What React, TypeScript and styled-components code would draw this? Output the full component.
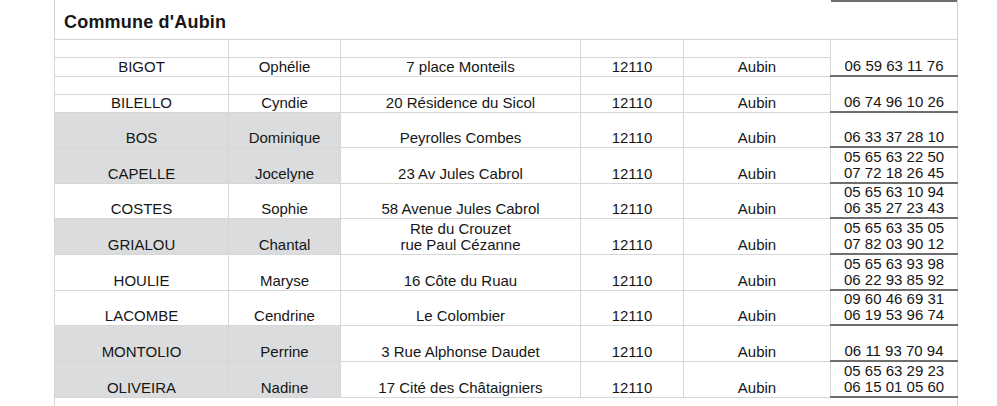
import React from "react"
import styled, { createGlobalStyle } from "styled-components"

type Entry = {
  nom?: string
  prenom?: string
  adresse?: string[]
  cp?: string
  ville?: string
  tel?: string[]
  height: number
  shaded?: boolean
  phoneLine?: boolean
}

const entries: Entry[] = [
  { height: 18 },
  {
    nom: "BIGOT",
    prenom: "Ophélie",
    adresse: ["7 place Monteils"],
    cp: "12110",
    ville: "Aubin",
    tel: ["06 59 63 11 76"],
    height: 19,
    phoneLine: true,
  },
  { height: 18 },
  {
    nom: "BILELLO",
    prenom: "Cyndie",
    adresse: ["20 Résidence du Sicol"],
    cp: "12110",
    ville: "Aubin",
    tel: ["06 74 96 10 26"],
    height: 18,
    phoneLine: true,
  },
  {
    nom: "BOS",
    prenom: "Dominique",
    adresse: ["Peyrolles Combes"],
    cp: "12110",
    ville: "Aubin",
    tel: ["06 33 37 28 10"],
    height: 35,
    shaded: true,
    phoneLine: true,
  },
  {
    nom: "CAPELLE",
    prenom: "Jocelyne",
    adresse: ["23 Av Jules Cabrol"],
    cp: "12110",
    ville: "Aubin",
    tel: ["05 65 63 22 50", "07 72 18 26 45"],
    height: 36,
    shaded: true,
    phoneLine: true,
  },
  {
    nom: "COSTES",
    prenom: "Sophie",
    adresse: ["58 Avenue Jules Cabrol"],
    cp: "12110",
    ville: "Aubin",
    tel: ["05 65 63 10 94", "06 35 27 23 43"],
    height: 34,
    phoneLine: true,
  },
  {
    nom: "GRIALOU",
    prenom: "Chantal",
    adresse: ["Rte du Crouzet", "rue Paul Cézanne"],
    cp: "12110",
    ville: "Aubin",
    tel: ["05 65 63 35 05", "07 82 03 90 12"],
    height: 36,
    shaded: true,
    phoneLine: true,
  },
  {
    nom: "HOULIE",
    prenom: "Maryse",
    adresse: ["16 Côte du Ruau"],
    cp: "12110",
    ville: "Aubin",
    tel: ["05 65 63 93 98", "06 22 93 85 92"],
    height: 36,
    phoneLine: true,
  },
  {
    nom: "LACOMBE",
    prenom: "Cendrine",
    adresse: ["Le Colombier"],
    cp: "12110",
    ville: "Aubin",
    tel: ["09 60 46 69 31", "06 19 53 96 74"],
    height: 35,
    phoneLine: true,
  },
  {
    nom: "MONTOLIO",
    prenom: "Perrine",
    adresse: ["3 Rue Alphonse Daudet"],
    cp: "12110",
    ville: "Aubin",
    tel: ["06 11 93 70 94"],
    height: 36,
    shaded: true,
    phoneLine: true,
  },
  {
    nom: "OLIVEIRA",
    prenom: "Nadine",
    adresse: ["17 Cité des Châtaigniers"],
    cp: "12110",
    ville: "Aubin",
    tel: ["05 65 63 29 23", "06 15 01 05 60"],
    height: 36,
    shaded: true,
    phoneLine: true,
  },
]

const GlobalStyle = createGlobalStyle`
  html, body {
    margin: 0;
    padding: 0;
    background: #ffffff;
  }
  body {
    font-family: "Liberation Sans", Arial, sans-serif;
    color: #161616;
  }
`

const Page = styled.div`
  width: 997px;
  height: 406px;
  overflow: hidden;
  padding-left: 54px;
  box-sizing: border-box;
`

const Sheet = styled.table`
  border-collapse: collapse;
  table-layout: fixed;
  width: 903px;
  font-size: 15px;
  line-height: 16px;
`

const TitleCell = styled.td`
  height: 39px;
  padding: 6px 0 0 9px;
  box-sizing: border-box;
  font-size: 18px;
  line-height: 20px;
  font-weight: bold;
  letter-spacing: 0.2px;
  vertical-align: middle;
  border-left: 1px solid #d4d4d4;
  border-right: 1px solid #d4d4d4;
  border-bottom: 1px solid #d4d4d4;
  background: linear-gradient(#6e6e6e, #6e6e6e) no-repeat right top / 126px 2px;
`

const Row = styled.tr<{ $h: number }>`
  height: ${(p) => p.$h}px;
`

const Cell = styled.td<{ $shaded?: boolean }>`
  padding: 0 0 1px;
  text-align: center;
  vertical-align: bottom;
  white-space: nowrap;
  border: 1px solid #d6d6d6;
  background: ${(p) => (p.$shaded ? "#dbdcdd" : "#ffffff")};
`

const PhoneCell = styled.td<{ $line?: boolean }>`
  padding: 0 0 1px;
  text-align: center;
  vertical-align: bottom;
  white-space: nowrap;
  border-left: 1px solid #d6d6d6;
  border-right: 1px solid #d6d6d6;
  border-top: none;
  border-bottom: ${(p) => (p.$line ? "2px solid #6e6e6e" : "none")};
`

const Line = styled.div`
  display: block;
`

const FillerCell = styled.td`
  height: 10px;
  padding: 0;
  border-left: 1px solid #d4d4d4;
  border-right: 1px solid #d4d4d4;
`

const widths = [174, 112, 240, 103, 147, 127]

export default function App() {
  return (
    <Page>
      <GlobalStyle />
      <Sheet>
        <colgroup>
          {widths.map((w, i) => (
            <col key={i} style={{ width: w }} />
          ))}
        </colgroup>
        <tbody>
          <tr>
            <TitleCell colSpan={6}>Commune d'Aubin</TitleCell>
          </tr>
          {entries.map((e, i) => (
            <Row key={i} $h={e.height}>
              <Cell $shaded={e.shaded}>{e.nom}</Cell>
              <Cell $shaded={e.shaded}>{e.prenom}</Cell>
              <Cell>
                {e.adresse?.map((a) => (
                  <Line key={a}>{a}</Line>
                ))}
              </Cell>
              <Cell>{e.cp}</Cell>
              <Cell>{e.ville}</Cell>
              <PhoneCell $line={e.phoneLine}>
                {e.tel?.map((t) => (
                  <Line key={t}>{t}</Line>
                ))}
              </PhoneCell>
            </Row>
          ))}
          <tr>
            <FillerCell colSpan={6} />
          </tr>
        </tbody>
      </Sheet>
    </Page>
  )
}
